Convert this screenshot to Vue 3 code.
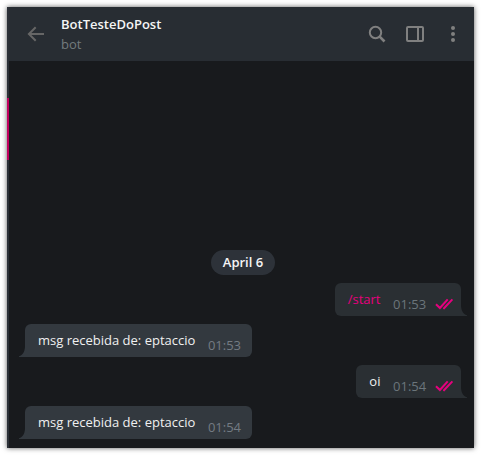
<script setup>
const messages = [
  { id: 1, text: '/start', time: '01:53', out: true, command: true },
  { id: 2, text: 'msg recebida de: eptaccio', time: '01:53', out: false },
  { id: 3, text: 'oi', time: '01:54', out: true },
  { id: 4, text: 'msg recebida de: eptaccio', time: '01:54', out: false },
]
</script>

<template>
  <div class="page">
    <main class="window">
      <aside class="edge"><span class="active-chat"></span></aside>
      <section class="chat">
        <header class="header">
          <svg class="back" width="18" height="16" viewBox="0 0 18 16">
            <path d="M17 8H2M8.7 1.2L1.9 8l6.8 6.8" />
          </svg>
          <div class="title">
            <div class="name">BotTesteDoPost</div>
            <div class="status">bot</div>
          </div>
          <svg class="tools" width="91" height="20" viewBox="-1 0 91 20">
            <circle cx="6.5" cy="8.5" r="5.7" />
            <path class="handle" d="M10.7 12.7L15.5 17.5" />
            <rect x="38" y="3" width="16" height="14" rx="1" />
            <path d="M49 3v14" />
            <g class="dots">
              <circle cx="84" cy="4" r="2" />
              <circle cx="84" cy="10" r="2" />
              <circle cx="84" cy="16" r="2" />
            </g>
          </svg>
        </header>
        <div class="history">
          <div class="date">April 6</div>
          <div v-for="m in messages" :key="m.id" class="bubble" :class="m.out ? 'out' : 'in'">
            <span class="text" :class="{ command: m.command }">{{ m.text }}</span>
            <span class="time">{{ m.time }}</span>
            <svg v-if="m.out" class="checks" width="19" height="12" viewBox="0 0 19 12">
              <path d="M1 6.2L4.9 10L12.7 1.4M8.3 9.9L9 10.2L17.4 1.4" />
            </svg>
            <svg class="tail" width="6" height="10" viewBox="0 0 6 10">
              <path d="M0 0C0.5 5 2 8 6 9.3V10H0Z" />
            </svg>
          </div>
        </div>
      </section>
    </main>
  </div>
</template>

<style>
body {
  margin: 0;
  background: #fff;
}
</style>

<style scoped>
.page {
  box-sizing: border-box;
  width: 481px;
  height: 455px;
  padding: 7px;
  overflow: hidden;
  background: #fff;
  font-family: "Open Sans", "Noto Sans", sans-serif;
  font-size: 13px;
  line-height: 18px;
}
.window {
  display: flex;
  width: 467px;
  height: 441px;
  background: #181a1d;
  box-shadow: 0 0 5px rgba(0, 0, 0, 0.65);
}
.edge {
  width: 2px;
  background: #2b3037;
}
.active-chat {
  display: block;
  height: 62px;
  margin-top: 91px;
  background: #c1005e;
}
.chat {
  display: flex;
  flex: 1;
  flex-direction: column;
}
.header {
  display: flex;
  box-sizing: border-box;
  height: 54px;
  padding-left: 18px;
  background: #282d33;
}
svg {
  flex: none;
  fill: none;
  stroke: #808080;
  stroke-width: 2;
}
.back {
  margin-top: 19px;
  stroke: #666;
}
.title {
  flex: 1;
  padding: 8px 0 0 16px;
}
.name {
  color: #f5f5f5;
  font-weight: 600;
}
.status {
  margin-top: 2px;
  color: #737b7e;
}
.tools {
  margin: 17px 15px 0 0;
}
.handle {
  stroke-width: 2.6;
}
.dots {
  fill: #808080;
  stroke: none;
}
.history {
  display: flex;
  flex: 1;
  flex-direction: column;
  justify-content: flex-end;
  gap: 8px;
  padding: 0 13px 9px 16px;
}
.date {
  align-self: center;
  box-sizing: border-box;
  width: 64px;
  height: 25px;
  margin-right: 1px;
  padding-left: 1px;
  border-radius: 13px;
  background: #2d3239;
  color: #f5f5f5;
  font-weight: 600;
  line-height: 25px;
  text-align: center;
}
.bubble {
  position: relative;
  display: flex;
  box-sizing: border-box;
  height: 33px;
  border-radius: 6px;
}
.in {
  align-self: flex-start;
  padding: 0 11px 0 13px;
  border-bottom-left-radius: 0;
  background: #33393f;
}
.out {
  align-self: flex-end;
  padding: 0 7px 0 13px;
  border-bottom-right-radius: 0;
  background: #2a2f33;
}
.text {
  padding-top: 7px;
  color: #f0f0f0;
}
.command {
  color: #e6007e;
}
.time {
  padding: 12px 0 0 12.6px;
  color: #737b83;
}
.out .time {
  color: #6b757b;
}
.checks {
  margin: 15px 0 0 8.8px;
  stroke: #e6007e;
}
.tail {
  position: absolute;
  bottom: 0;
  left: 100%;
  fill: #2a2f33;
  stroke: none;
}
.in .tail {
  right: 100%;
  left: auto;
  fill: #33393f;
  transform: scaleX(-1);
}
</style>
